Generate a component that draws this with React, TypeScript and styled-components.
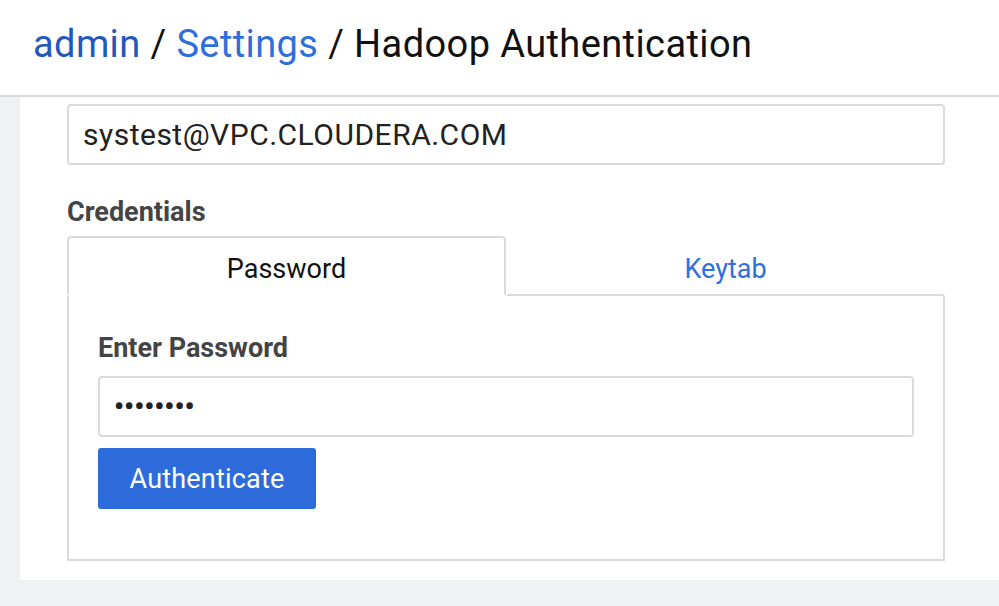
import React, { useState } from "react";
import styled, { createGlobalStyle } from "styled-components";

const GlobalStyle = createGlobalStyle`
  html, body {
    margin: 0;
    padding: 0;
    background: #f0f1f3;
    font-family: Roboto, "Liberation Sans", Arial, sans-serif;
  }
  * { box-sizing: border-box; }
`;

const Header = styled.header`
  height: 97px;
  background: #ffffff;
  border-bottom: 2px solid #d8d9dc;
  display: flex;
  align-items: center;
  padding: 0 0 8px 33px;
`;

const Breadcrumb = styled.h1`
  margin: 0;
  font-size: 38px;
  font-weight: 400;
  letter-spacing: 0.4px;
  color: #111;
  white-space: nowrap;
`;

const Crumb = styled.a<{ $visited?: boolean }>`
  color: ${(p) => (p.$visited ? "#2257bd" : "#2f6fdc")};
  text-decoration: none;
`;

const Main = styled.main`
  padding-left: 20px;
`;

const Panel = styled.section`
  background: #ffffff;
  height: 483px;
  padding: 7px 54px 0 47px;
`;

const TextInput = styled.input`
  display: block;
  width: 100%;
  height: 61px;
  border: 2px solid #dadadd;
  border-radius: 4px;
  padding: 0 14px;
  font-family: Roboto, "Liberation Sans", Arial, sans-serif;
  font-size: 30px;
  letter-spacing: 0.5px;
  color: #222;
  outline: none;
`;

const Label = styled.div`
  font-size: 27px;
  font-weight: 700;
  color: #444;
  line-height: 30px;
`;

const CredLabel = styled(Label)`
  margin: 32px 0 9px;
`;

const TabRow = styled.div`
  display: flex;
  height: 60px;
`;

const Tab = styled.button<{ $active: boolean }>`
  flex: 1;
  height: 60px;
  background: #fff;
  font-family: Roboto, "Liberation Sans", Arial, sans-serif;
  font-size: 27px;
  padding: 6px 0 0;
  cursor: pointer;
  color: ${(p) => (p.$active ? "#111" : "#2f6fdc")};
  border: 2px solid ${(p) => (p.$active ? "#dadadd" : "transparent")};
  border-bottom: 2px solid ${(p) => (p.$active ? "transparent" : "#dadadd")};
  border-radius: ${(p) => (p.$active ? "4px 4px 0 0" : "0")};
`;

const Pane = styled.div`
  height: 265px;
  border: 2px solid #dadadd;
  border-top: none;
  padding: 37px 29px 0;
`;

const PwInput = styled(TextInput)`
  margin-top: 13px;
  font-size: 28px;
  letter-spacing: 0;
  font-weight: 700;
`;

const PrimaryButton = styled.button`
  margin-top: 11px;
  width: 218px;
  height: 61px;
  border: none;
  border-radius: 3px;
  background: #2d6bdb;
  color: #fff;
  font-family: Roboto, "Liberation Sans", Arial, sans-serif;
  font-size: 27px;
  letter-spacing: 0.2px;
  cursor: pointer;
`;

export default function App() {
  const [tab, setTab] = useState<"password" | "keytab">("password");
  return (
    <>
      <GlobalStyle />
      <Header>
        <Breadcrumb>
          <Crumb href="#" $visited>admin</Crumb> / <Crumb href="#">Settings</Crumb> / Hadoop Authentication
        </Breadcrumb>
      </Header>
      <Main>
        <Panel>
          <TextInput defaultValue="systest@VPC.CLOUDERA.COM" />
          <CredLabel>Credentials</CredLabel>
          <TabRow>
            <Tab $active={tab === "password"} onClick={() => setTab("password")}>Password</Tab>
            <Tab $active={tab === "keytab"} onClick={() => setTab("keytab")}>Keytab</Tab>
          </TabRow>
          <Pane>
            <Label>Enter Password</Label>
            <PwInput type="password" defaultValue="password" />
            <PrimaryButton>Authenticate</PrimaryButton>
          </Pane>
        </Panel>
      </Main>
    </>
  );
}
